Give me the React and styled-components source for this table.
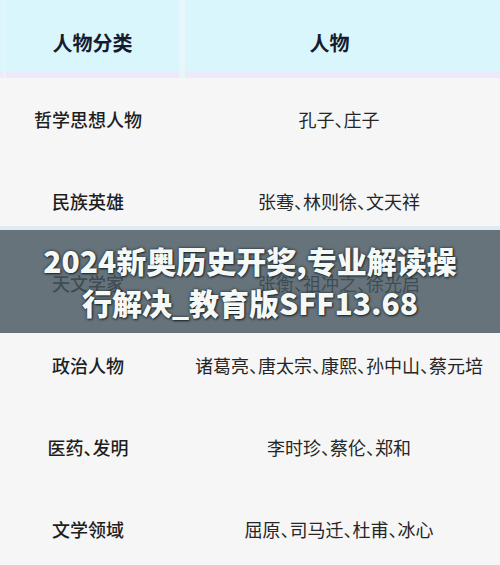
import React from 'react';
import styled, { createGlobalStyle } from 'styled-components';

const rows = [
  { type: '哲学思想人物', people: '孔子、庄子' },
  { type: '民族英雄', people: '张骞、林则徐、文天祥' },
  { type: '天文学家', people: '张衡、祖冲之、徐光启' },
  { type: '政治人物', people: '诸葛亮、唐太宗、康熙、孙中山、蔡元培' },
  { type: '医药、发明', people: '李时珍、蔡伦、郑和' },
  { type: '文学领域', people: '屈原、司马迁、杜甫、冰心' },
];

const App = () => {
  return (
    <>
      <GlobalStyle />
      <Page>
        <Table>
          <HeadRow>
            <HeadCell>人物分类</HeadCell>
            <HeadCell $shift>人物</HeadCell>
          </HeadRow>
          {rows.map((row) => (
            <Row key={row.type}>
              <TypeCell>{row.type}</TypeCell>
              <PeopleCell>{row.people}</PeopleCell>
            </Row>
          ))}
        </Table>
        <Banner>
          <BannerTitle>
            2024新奥历史开奖,专业解读操
            <br />
            行解决_教育版SFF13.68
          </BannerTitle>
        </Banner>
      </Page>
    </>
  );
};

const GlobalStyle = createGlobalStyle`
  body {
    margin: 0;
    background: #f6f6f6;
    font-family: "Noto Sans CJK SC", "Noto Sans", sans-serif;
  }
`;

const Page = styled.div`
  position: relative;
  width: 500px;
  height: 565px;
  overflow: hidden;
  background: #f6f6f6;
`;

const Table = styled.div`
  display: flex;
  flex-direction: column;
`;

const HeadRow = styled.div`
  display: grid;
  grid-template-columns: 176px 1fr;
  height: 78px;
  padding-left: 3px;
  background: linear-gradient(to bottom, #d9f6fc 0, #d9f6fc 71px, #eee9f8 71px, #eee9f8 78px);
  box-sizing: border-box;
`;

const HeadCell = styled.div`
  display: flex;
  align-items: center;
  justify-content: center;
  padding-top: 6px;
  padding-right: ${(props) => (props.$shift ? '26px' : '0')};
  font-size: 20px;
  font-weight: 700;
  color: #161b2e;

  &:first-child {
    border-left: 3px solid #e4f5f9;
  }

  & + & {
    border-left: 6px solid #e6f6f9;
  }
`;

const Row = styled.div`
  display: grid;
  grid-template-columns: 176px 1fr;
  height: 82px;
  align-items: center;
  font-feature-settings: "halt";
`;

const TypeCell = styled.div`
  text-align: center;
  font-size: 18px;
  font-weight: 500;
  color: #1e1e1e;
`;

const PeopleCell = styled.div`
  text-align: center;
  padding-left: 2px;
  font-size: 18px;
  font-weight: 400;
  color: #262626;
`;

const Banner = styled.div`
  position: absolute;
  left: 0;
  right: 0;
  top: 226px;
  height: 107px;
  display: flex;
  align-items: center;
  justify-content: center;
  background: rgba(69, 86, 95, 0.82);
  border-top: 4px solid rgba(235, 250, 253, 0.9);
  box-sizing: border-box;
`;

const BannerTitle = styled.div`
  margin-top: -2px;
  text-align: center;
  font-size: 30px;
  font-weight: 900;
  line-height: 42px;
  color: #f4f9f8;
  text-shadow: 0 0 3px rgba(20, 30, 35, 0.9), 1px 1px 2px rgba(20, 30, 35, 0.8);
`;

export default App;
